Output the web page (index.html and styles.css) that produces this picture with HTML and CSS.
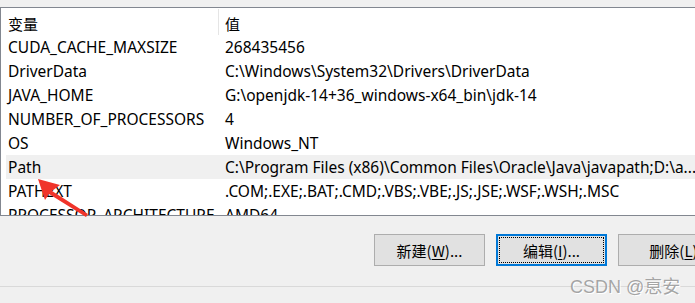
FILE: index.html
```html
<!DOCTYPE html>
<html lang="zh">
<head>
<meta charset="utf-8">
<link rel="stylesheet" href="styles.css">
</head>
<body>
<div class="page">
  <div class="listbox">
    <div class="head">
      <div class="c1">变量</div>
      <div class="c2 hdiv">值</div>
    </div>
    <div class="row"><div class="c1">CUDA_CACHE_MAXSIZE</div><div class="c2">268435456</div></div>
    <div class="row"><div class="c1">DriverData</div><div class="c2">C:\Windows\System32\Drivers\DriverData</div></div>
    <div class="row"><div class="c1">JAVA_HOME</div><div class="c2">G:\openjdk-14+36_windows-x64_bin\jdk-14</div></div>
    <div class="row"><div class="c1">NUMBER_OF_PROCESSORS</div><div class="c2">4</div></div>
    <div class="row"><div class="c1">OS</div><div class="c2">Windows_NT</div></div>
    <div class="row sel"><div class="c1">Path</div><div class="c2">C:\Program Files (x86)\Common Files\Oracle\Java\javapath;D:\a...</div></div>
    <div class="row"><div class="c1">PATHEXT</div><div class="c2">.COM;.EXE;.BAT;.CMD;.VBS;.VBE;.JS;.JSE;.WSF;.WSH;.MSC</div></div>
    <div class="row"><div class="c1">PROCESSOR_ARCHITECTURE</div><div class="c2">AMD64</div></div>
  </div>
  <div class="buttons">
    <div class="btn">新建(<u>W</u>)...</div>
    <div class="btn focus"><span class="ring">编辑(<u>I</u>)...</span></div>
    <div class="btn">删除(<u>L</u>)</div>
  </div>
  <div class="sep"></div>
  <div class="watermark">CSDN @恴安</div>
  <svg class="arrow" width="100" height="60" viewBox="0 0 100 60">
    <polygon points="38,0 60,6 52,12 88,35 86,38 49,15 45,21" fill="#f0342a"/>
  </svg>
</div>
</body>
</html>
```

FILE: styles.css
```css
html, body {
  margin: 0;
  padding: 0;
  background: #f0f0f0;
}
.page {
  position: relative;
  width: 695px;
  height: 303px;
  overflow: hidden;
  font-family: "Noto Sans", "Noto Sans CJK SC", sans-serif;
  font-size: 15.5px;
  color: #000;
}
.listbox {
  margin-top: 7px;
  height: 207px;
  width: 720px;
  background: #fff;
  border-top: 1px solid #828790;
  border-left: 1px solid #828790;
  border-bottom: 1px solid #828790;
  overflow: hidden;
}
.head, .row {
  display: flex;
  margin-left: 5px;
  white-space: nowrap;
}
.head {
  height: 27px;
  align-items: center;
}
.row {
  height: 24px;
  align-items: center;
}
.c1 {
  width: 210px;
  padding-left: 2px;
  flex: none;
  overflow: hidden;
}
.c2 {
  padding-left: 7px;
  flex: none;
}
.head .c1 {
  font-family: "Noto Sans CJK SC", sans-serif;
  font-size: 15px;
  padding-top: 3px;
}
.hdiv {
  height: 26px;
  line-height: 29px;
  border-left: 1px solid #e5e5e5;
  padding-left: 6px;
  font-family: "Noto Sans CJK SC", sans-serif;
  font-size: 15px;
}
.sel {
  background: #f0f0f0;
}
.buttons {
  display: flex;
  gap: 11px;
  margin-top: 18px;
  padding-left: 374px;
  white-space: nowrap;
}
.btn {
  flex: none;
  width: 109px;
  height: 30px;
  background: #e1e1e1;
  border: 1px solid #adadad;
  display: flex;
  align-items: center;
  justify-content: center;
  font-family: "Noto Sans CJK SC", sans-serif;
  font-size: 15px;
}
.btn u {
  text-underline-offset: 2px;
}
.focus {
  width: 107px;
  height: 28px;
  border: 2px solid #0078d7;
}
.ring {
  box-sizing: border-box;
  width: 105px;
  height: 26px;
  border: 1px dotted #000;
  display: flex;
  align-items: center;
  justify-content: center;
}
.sep {
  margin-top: 20px;
  height: 1px;
  background: #d9d9d9;
}
.watermark {
  position: absolute;
  left: 570px;
  top: 272px;
  font-family: "Liberation Sans", "Noto Sans CJK SC", sans-serif;
  font-size: 18px;
  color: rgba(150, 150, 150, 0.85);
  text-shadow: 1px 1px 0 #fff;
}
.arrow {
  position: absolute;
  left: 0;
  top: 179px;
}
```
